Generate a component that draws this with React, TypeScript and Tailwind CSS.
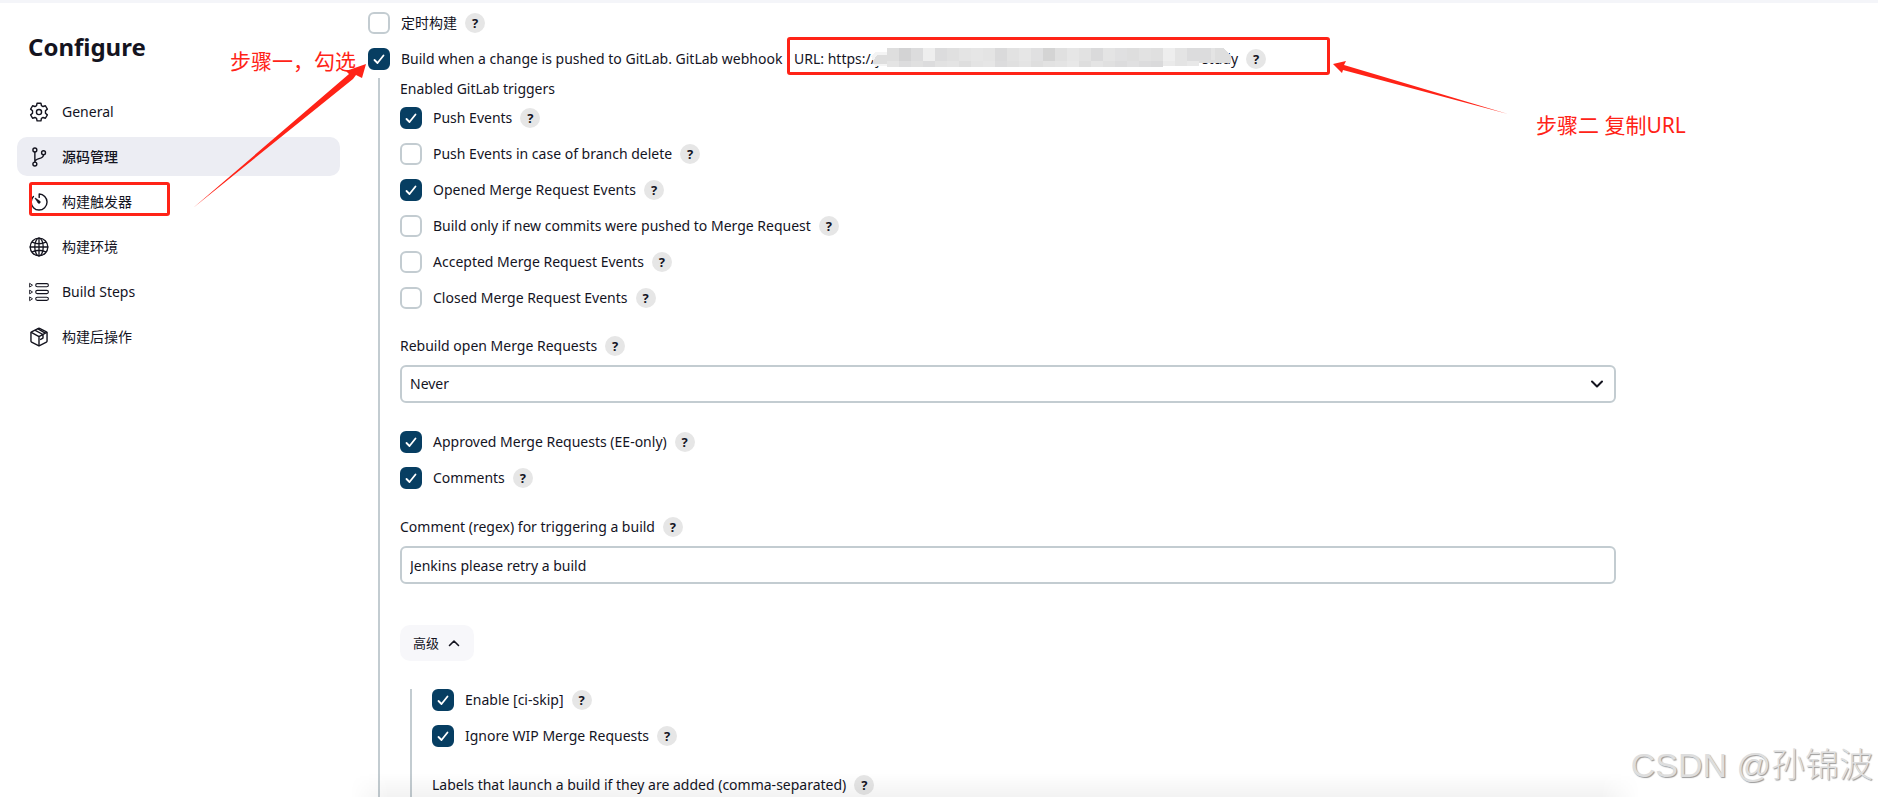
import React, { useId, useState } from "react";

type HelpRow = { label: string; checked: boolean };

const EVENTS: HelpRow[] = [
  { label: "Push Events", checked: true },
  { label: "Push Events in case of branch delete", checked: false },
  { label: "Opened Merge Request Events", checked: true },
  { label: "Build only if new commits were pushed to Merge Request", checked: false },
  { label: "Accepted Merge Request Events", checked: false },
  { label: "Closed Merge Request Events", checked: false },
];

function GearIcon() {
  return (
    <svg viewBox="0 0 512 512" className="size-5" fill="none" stroke="currentColor" strokeWidth="36" strokeLinecap="round" strokeLinejoin="round">
      <circle cx="256" cy="256" r="66" />
      <path d="M206 30h100l12 62 42 24 60-20 50 86-48 42v64l48 42-50 86-60-20-42 24-12 62H206l-12-62-42-24-60 20-50-86 48-42v-64l-48-42 50-86 60 20 42-24z" />
    </svg>
  );
}

function BranchIcon() {
  return (
    <svg viewBox="0 0 512 512" className="size-5" fill="none" stroke="currentColor" strokeWidth="36" strokeLinecap="round" strokeLinejoin="round">
      <circle cx="150" cy="76" r="50" />
      <circle cx="150" cy="436" r="50" />
      <circle cx="372" cy="146" r="50" />
      <path d="M150 126v260M372 196c0 138-222 66-222 190" />
    </svg>
  );
}

function TimerIcon() {
  return (
    <svg viewBox="0 0 512 512" className="size-5" fill="none" stroke="currentColor" strokeWidth="36" strokeLinecap="round" strokeLinejoin="round">
      <path d="M112.9 112.9a202 202 0 0 0-56.900 143.100c0 110.500 89.500 206 200 206s206-95.500 206-206S371.600 52 261.100 52v86" />
      <path fill="currentColor" strokeWidth="10" d="M233.380 278.630l-79-113a8.130 8.130 0 0 1 11.320-11.320l113 79a32.500 32.500 0 0 1-37.250 53.260 33.210 33.210 0 0 1-8.070-7.940z" />
    </svg>
  );
}

function GlobeIcon() {
  return (
    <svg viewBox="0 0 512 512" className="size-5" fill="none" stroke="currentColor" strokeWidth="34" strokeLinecap="round">
      <circle cx="256" cy="256" r="226" />
      <ellipse cx="256" cy="256" rx="108" ry="226" />
      <path d="M256 30v452M30 256h452M84 130c110 56 234 56 344 0M84 382c110-56 234-56 344 0" />
    </svg>
  );
}

function StepsIcon() {
  return (
    <svg viewBox="0 0 20 20" className="size-5" fill="none" stroke="currentColor" strokeWidth="1.100" strokeLinejoin="round">
      <rect x="6.700" y="1.600" width="12.700" height="3.200" rx="1.600" />
      <rect x="6.700" y="8.400" width="12.700" height="3.200" rx="1.600" />
      <rect x="6.700" y="15.200" width="12.700" height="3.200" rx="1.600" />
      <path strokeWidth=".9" d="M.6 1.300v3.800l2.900-1.900zM.6 8.100v3.800L3.500 10zM.6 14.900v3.800l2.900-1.900z" />
    </svg>
  );
}

function PackageIcon() {
  return (
    <svg viewBox="0 0 512 512" className="size-5" fill="none" stroke="currentColor" strokeWidth="36" strokeLinecap="round" strokeLinejoin="round">
      <path d="M462 361V151a26 26 0 00-16-24L270 36a34 34 0 00-28 0L66 127a26 26 0 00-16 24v210a26 26 0 0016 24l176 92a34 34 0 0028 0l176-92a26 26 0 0016-24z" />
      <path d="M58 140l198 104 198-104M256 472V244M160 88l198 104v92l-60 34M230 50l186 104" />
    </svg>
  );
}

const NAV = [
  { label: "General", Icon: GearIcon },
  { label: "源码管理", Icon: BranchIcon, active: true },
  { label: "构建触发器", Icon: TimerIcon, marked: true },
  { label: "构建环境", Icon: GlobeIcon },
  { label: "Build Steps", Icon: StepsIcon },
  { label: "构建后操作", Icon: PackageIcon },
];

function Help({ topic }: { topic: string }) {
  return (
    <button
      type="button"
      aria-label={`Help for ${topic}`}
      className="flex size-5 shrink-0 items-center justify-center rounded-full bg-[#e6e6e6] text-[13px] leading-5 font-bold"
    >
      ?
    </button>
  );
}

function Check({ label, checked, children }: HelpRow & { children?: React.ReactNode }) {
  const id = useId();
  const [on, setOn] = useState(checked);
  return (
    <div className="flex h-[22px] items-center gap-2 whitespace-nowrap">
      <span className="grid shrink-0">
        <input
          id={id}
          type="checkbox"
          checked={on}
          onChange={(e) => setOn(e.target.checked)}
          className="col-start-1 row-start-1 size-[22px] appearance-none rounded-md border-2 border-[#c3ccd1] bg-white checked:border-[#073e62] checked:bg-[#073e62]"
        />
        {on && (
          <svg viewBox="0 0 22 22" className="pointer-events-none col-start-1 row-start-1 size-[22px]" fill="none" stroke="white" strokeWidth="1.800" strokeLinecap="round" strokeLinejoin="round">
            <path d="M6.500 12l3 3 6-7.500" />
          </svg>
        )}
      </span>
      <label htmlFor={id} className="ml-[3px]">
        {children ?? label}
      </label>
      <Help topic={label} />
    </div>
  );
}

const MOSAIC_TOP = ["#dedede", "#d3d3d4", "#dcdcdd", "#eeeeee", "#dcdcdd", "#e0e0e0", "#e4e4e4", "#e6e6e6", "#e4e4e4", "#dadadb", "#e2e2e2", "#e6e6e6", "#e0e0e1", "#d4d4d4", "#e0e0e0", "#e6e6e6", "#e2e2e2", "#dadadb", "#e4e4e4", "#e0e0e1", "#dedede", "#e2e2e2", "#e0e0e0", "#eeeeee", "#e4e4e4", "#dcdcdd", "#dcdcdd", "#e4e4e4"];
const MOSAIC_BOTTOM = ["#e4e4e4", "#dcdcdd", "#e0e0e0", "#dcdcdd", "#e2e2e2", "#e4e4e4", "#dedede", "#e4e4e4", "#e6e6e6", "#dcdcdd", "#e0e0e0", "#e4e4e4", "#dedede", "#e2e2e2", "#e4e4e4", "#e8e8e8", "#dedede", "#e4e4e4", "#e0e0e0", "#dcdcdd", "#e0e0e1", "#dcdcdd", "#dadadb", "#eaeaea", "#e4e4e4", "#e8e8e8"];

function Mosaic() {
  return (
    <svg viewBox="0 0 360 22" className="absolute top-0 left-[77px] h-[22px] w-[360px]" shapeRendering="crispEdges" aria-hidden="true">
      <path d="M0 8l5-4h12v14H4z" fill="#f4f4f4" />
      <path d="M2 13l4-6h11v9H2z" fill="#dedede" />
      {MOSAIC_TOP.map((fill, i) => (
        <rect key={i} x={16 + i * 12} y="0" width="12" height="13" fill={fill} />
      ))}
      {MOSAIC_BOTTOM.map((fill, i) => (
        <rect key={i} x={16 + i * 12} y="13" width="12" height={i > 22 ? 5 : 6} fill={fill} />
      ))}
      <path d="M344 0h8l8 8v7h-32v-3h16z" fill="#dedede" />
    </svg>
  );
}

function FieldLabel({ htmlFor, children }: { htmlFor: string; children: string }) {
  return (
    <div className="flex h-[22px] items-center gap-2 whitespace-nowrap">
      <label htmlFor={htmlFor}>{children}</label>
      <Help topic={children} />
    </div>
  );
}

export default function App() {
  return (
    <div className="relative flex h-screen flex-col overflow-hidden bg-white font-['Noto_Sans','Noto_Sans_CJK_SC',sans-serif] text-[14px] leading-[22px] text-[#14141f]">
      <div className="h-[3px] shrink-0 bg-[#f4f5f9]" />
      <div className="flex min-h-0 flex-1">
        <aside className="w-[368px] shrink-0 pr-7 pl-[17px]">
          <h1 className="mt-7 ml-[11px] text-[24px] leading-8 font-bold">Configure</h1>
          <nav className="mt-[29px] flex flex-col gap-[6px]">
            {NAV.map(({ label, Icon, active, marked }) => (
              <a
                key={label}
                href="#"
                className={`relative flex h-[39px] items-center gap-[13px] rounded-[10px] pl-3 ${active ? "bg-[#ecedf3] font-medium" : ""}`}
              >
                <Icon />
                {label}
                {marked && <span className="absolute top-0 left-3 h-[34px] w-[141px] rounded-[3px] border-[3px] border-[#ff2317]" />}
              </a>
            ))}
          </nav>
        </aside>

        <main className="max-w-[1248px] min-w-0 flex-1 pt-[9px]">
          <div className="flex flex-col gap-[14px]">
            <Check label="定时构建" checked={false} />
            <Check label="GitLab webhook" checked>
              Build when a change is pushed to GitLab. GitLab webhook{" "}
              <span className="relative ml-2 inline-block w-[444px]">
                <span className="flex justify-between">
                  <span>URL: https://j</span>
                  <span>study</span>
                </span>
                <Mosaic />
                <span className="absolute -top-[11px] -left-[7px] h-[38px] w-[543px] rounded-[3px] border-[3px] border-[#ff2317]" />
              </span>
            </Check>
          </div>

          <section className="mt-2 ml-[10px] border-l-2 border-[#c3ccd1] pb-10 pl-5">
            <p>Enabled GitLab triggers</p>
            <div className="mt-[7px] flex flex-col gap-[14px]">
              {EVENTS.map((e) => (
                <Check key={e.label} {...e} />
              ))}
            </div>

            <div className="mt-[26px]">
              <FieldLabel htmlFor="rebuild">Rebuild open Merge Requests</FieldLabel>
              <div className="mt-2 grid items-center">
                <select id="rebuild" className="col-start-1 row-start-1 h-[38px] w-full appearance-none rounded-md border-2 border-[#c3ccd1] bg-white px-2">
                  <option>Never</option>
                </select>
                <svg viewBox="0 0 14 14" className="pointer-events-none col-start-1 row-start-1 mr-3 size-[14px] justify-self-end" fill="none" stroke="currentColor" strokeWidth="2" strokeLinecap="round" strokeLinejoin="round">
                  <path d="M2 4.500l5 5 5-5" />
                </svg>
              </div>
            </div>

            <div className="mt-7 flex flex-col gap-[14px]">
              <Check label="Approved Merge Requests (EE-only)" checked />
              <Check label="Comments" checked />
            </div>

            <div className="mt-[27px]">
              <FieldLabel htmlFor="comment">Comment (regex) for triggering a build</FieldLabel>
              <input
                id="comment"
                type="text"
                defaultValue="Jenkins please retry a build"
                className="mt-2 block h-[38px] w-full rounded-md border-2 border-[#c3ccd1] px-2"
              />
            </div>

            <button type="button" className="mt-[41px] flex h-9 items-center gap-2 rounded-[10px] bg-[#f7f7fa] px-[13px] text-[13px]">
              高级
              <svg viewBox="0 0 14 14" className="size-[14px]" fill="none" stroke="currentColor" strokeWidth="1.600" strokeLinecap="round" strokeLinejoin="round">
                <path d="M2.500 9.500L7 5l4.500 4.500" />
              </svg>
            </button>

            <section className="mt-7 ml-[10px] border-l-2 border-[#c3ccd1] pl-5">
              <div className="flex flex-col gap-[14px]">
                <Check label="Enable [ci-skip]" checked />
                <Check label="Ignore WIP Merge Requests" checked />
              </div>
              <div className="mt-[27px] pb-10">
                <FieldLabel htmlFor="labels">Labels that launch a build if they are added (comma-separated)</FieldLabel>
                <input id="labels" type="text" className="mt-2 block h-[38px] w-full rounded-md border-2 border-[#c3ccd1] px-2" />
              </div>
            </section>
          </section>
        </main>
      </div>

      <div className="pointer-events-none absolute bottom-0 left-[350px] h-6 w-[1290px] bg-linear-to-t from-black/5 to-transparent mask-x-from-97% mask-x-to-100%" />

      <svg viewBox="0 0 180 150" className="pointer-events-none absolute top-[61px] left-[190px] h-[150px] w-[180px]" fill="#ff2317" aria-hidden="true">
        <path d="M3 147L159 13l-3-3 20-7-4 14-6-3L163 18z" />
      </svg>
      <svg viewBox="0 0 180 60" className="pointer-events-none absolute top-[58px] left-[1330px] h-[60px] w-[180px]" fill="#ff2317" aria-hidden="true">
        <path d="M3 6l13-3-2 4 164 49L13 12l-1 3z" />
      </svg>
      <p className="pointer-events-none absolute top-[46px] left-[230px] text-[21px] leading-[30px] whitespace-nowrap text-[#ff2317]">步骤一，勾选</p>
      <p className="pointer-events-none absolute top-[110px] left-[1536px] text-[21px] leading-[30px] whitespace-nowrap text-[#ff2317]">步骤二 复制URL</p>
      <p className="pointer-events-none absolute right-[5px] bottom-[10px] font-['Liberation_Sans','Noto_Sans_CJK_SC',sans-serif] text-[34px] leading-[44px] font-light whitespace-nowrap text-[#dedede] [text-shadow:1px_1px_1px_#999]">
        CSDN @孙锦波
      </p>
    </div>
  );
}
